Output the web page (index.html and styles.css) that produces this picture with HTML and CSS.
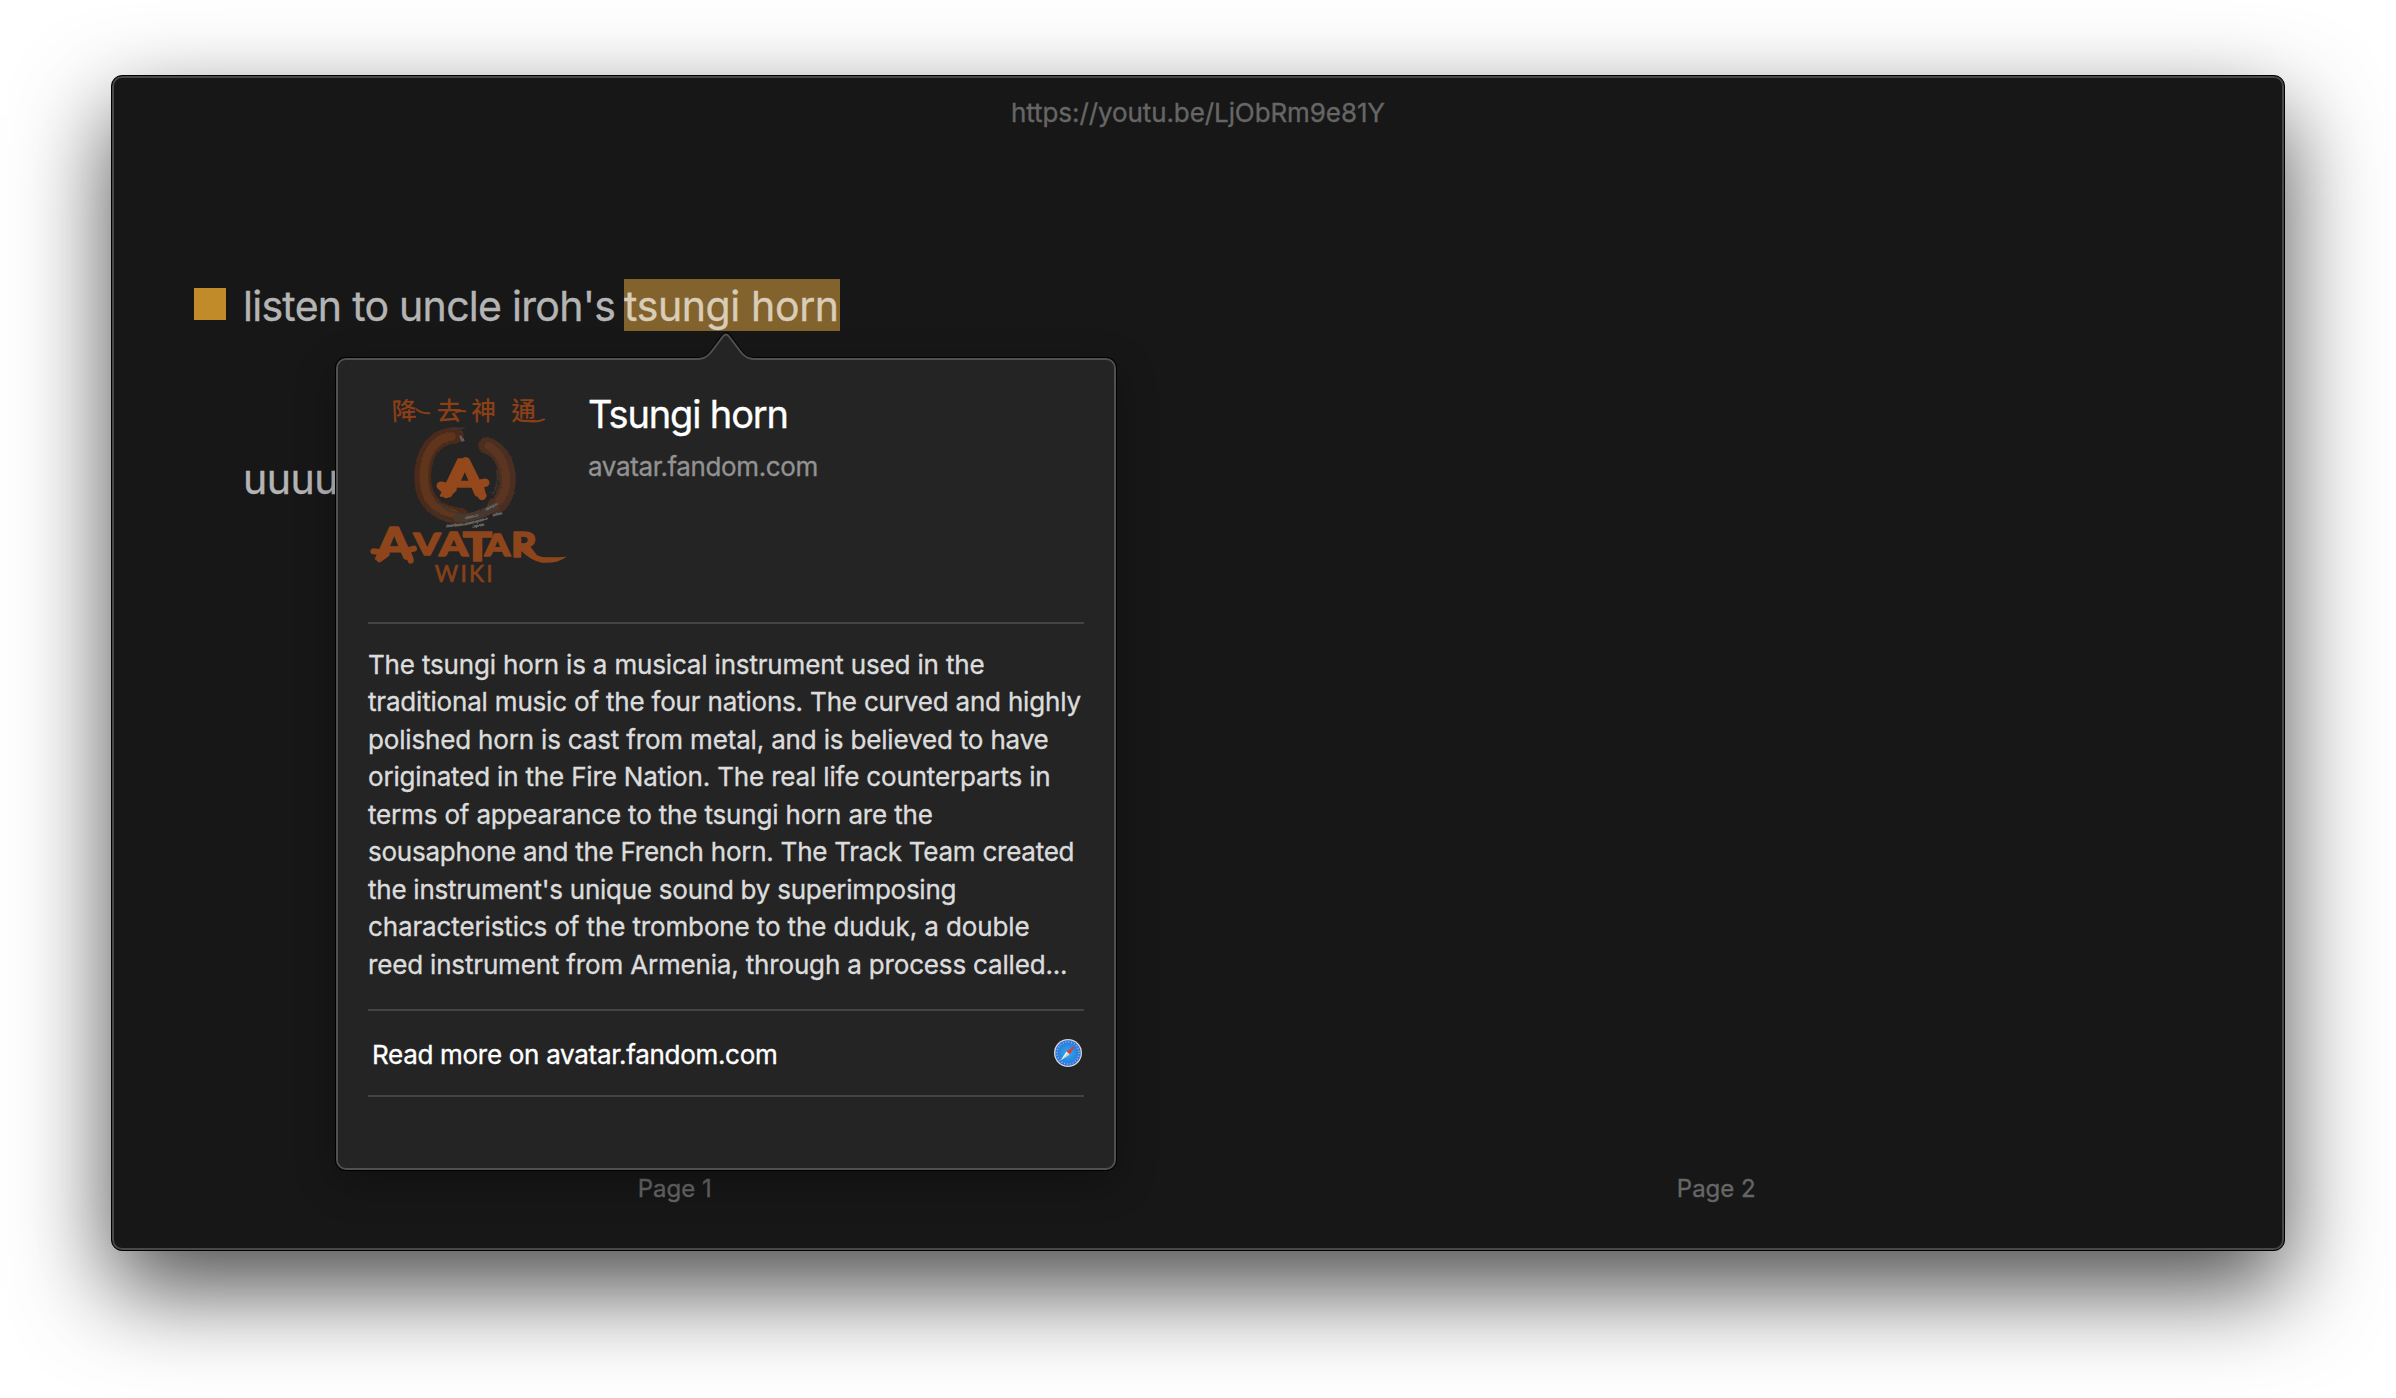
FILE: index.html
```
<!DOCTYPE html>
<html lang="en">
<head>
<meta charset="utf-8">
<title>Tsungi horn</title>
<link rel="stylesheet" href="styles.css">
</head>
<body>
<main class="window">
  <header class="address">https://youtu.be/LjObRm9e81Y</header>
  <div class="pages">
    <section class="page">
      <ul class="outline">
        <li class="item">
          <span class="bullet"></span>
          <span class="item-text lead">listen to uncle iroh's</span>
          <mark class="selection">tsungi horn</mark>
        </li>
        <li class="item">
          <span class="bullet blank"></span>
          <span class="item-text hum">uuuuu</span>
        </li>
      </ul>
      <footer class="page-number">Page 1</footer>
    </section>
    <section class="page">
      <footer class="page-number">Page 2</footer>
    </section>
  </div>

  <aside class="popover">
    <svg class="arrow" viewBox="0 0 64 28" width="64" height="28">
      <path d="M0 27.5V26C11 26 15 22 19 16L28 3.5Q31 -.5 34 3.5L43 16C47 22 51 26 62 26V27.5Z" fill="#242424"/>
      <path d="M0 24C10 24 13 20.500 17.500 14L27 .9Q31 -3.500 35 .9L44.500 14C49 20.500 52 24 62 24" fill="none" stroke="#000" stroke-width="1"/>
      <path d="M0 25C11 25 14.500 21 18.500 15L28 2.500Q31 -1.500 34 2.500L43.500 15C47.500 21 51 25 62 25" fill="none" stroke="#505050" stroke-width="2"/>
    </svg>
    <div class="summary">
      <svg class="logo" viewBox="0 0 200 200" width="200" height="200">
        <defs>
          <filter id="brush" x="-10%" y="-10%" width="120%" height="120%">
            <feTurbulence type="fractalNoise" baseFrequency=".12" numOctaves="3" seed="4"/>
            <feDisplacementMap in="SourceGraphic" scale="8" xChannelSelector="R" yChannelSelector="G"/>
          </filter>
        </defs>
        <g transform="translate(-28 -20) scale(.33333)">
          <g class="hanzi">
            <text x="156" y="150" transform="rotate(-3 190 130)">降</text>
            <text x="290" y="149">去</text>
            <text x="394" y="149">神</text>
            <text x="514" y="149">通</text>
            <path d="M230 118Q242 130 268 130M348 126Q360 122 376 124M556 152Q592 158 612 148" fill="none" stroke="#8a3f17" stroke-width="6" stroke-linecap="round"/>
          </g>
          <g filter="url(#brush)" fill="none" stroke-linecap="round">
            <path d="M346 196C280 200 248 252 248 322C248 392 292 434 362 438" stroke="#4c2c1a" stroke-width="50"/>
            <path d="M334 200C285 204 250 252 252 322C250 380 282 420 344 432" stroke="#5e351b" stroke-width="26"/>
            <path d="M440 226C484 240 504 290 502 336C500 376 486 396 466 410" stroke="#4c2e20" stroke-width="50"/>
            <path d="M446 228C480 246 500 294 498 336C496 366 490 380 478 392" stroke="#5b3520" stroke-width="24"/>
            <path d="M352 444Q410 446 466 410" stroke="#46372f" stroke-width="26"/>
            <path d="M322 468Q380 466 440 446M378 444L412 436M440 418L470 402M460 436L484 430M400 470L430 464M362 200L367 212" stroke="#64605d" stroke-width="7"/>
            <path d="M332 178L372 174M270 414Q300 446 334 456M286 392Q320 424 350 428M470 300Q480 340 458 372" stroke="#3b3532" stroke-width="5"/>
          </g>
          <g class="emblem">
            <text x="304" y="378" font-size="154" textLength="132" lengthAdjust="spacingAndGlyphs">A</text>
            <path d="M302 347L330 352M318 372L338 356M304 349L326 370M404 344L436 338M420 352L426 378M376 274L350 330M378 274L406 330" fill="none" stroke="#94481c" stroke-width="25" stroke-linecap="round" stroke-linejoin="round"/>
          </g>
          <g class="wordmark">
            <text x="108" y="568" font-size="132" textLength="108" lengthAdjust="spacingAndGlyphs">A</text>
            <path d="M100 544L134 548M118 568L140 552M198 542L222 536M206 552L212 572" fill="none" stroke="#8f451b" stroke-width="18" stroke-linecap="round"/>
            <text x="221" y="555" font-size="92" textLength="80" lengthAdjust="spacingAndGlyphs">V</text>
            <text x="298" y="559" font-size="96" textLength="86" lengthAdjust="spacingAndGlyphs">A</text>
            <text x="368" y="572" font-size="122" textLength="88" lengthAdjust="spacingAndGlyphs">T</text>
            <text x="434" y="559" font-size="92" textLength="76" lengthAdjust="spacingAndGlyphs">A</text>
            <text x="514" y="560" font-size="100" textLength="76" lengthAdjust="spacingAndGlyphs">R</text>
            <path d="M546 528Q590 564 624 562Q656 562 680 560Q650 582 606 578Q576 574 540 540Z" fill="#8f451b"/>
          </g>
          <text class="wiki" x="284" y="636" textLength="174" lengthAdjust="spacing">WIKI</text>
        </g>
      </svg>
      <div class="heading">
        <h1 class="title">Tsungi horn</h1>
        <p class="domain">avatar.fandom.com</p>
      </div>
    </div>
    <p class="extract">
      <span class="line">The tsungi horn is a musical instrument used in the</span>
      <span class="line snug">traditional music of the four nations. The curved and highly</span>
      <span class="line">polished horn is cast from metal, and is believed to have</span>
      <span class="line">originated in the Fire Nation. The real life counterparts in</span>
      <span class="line">terms of appearance to the tsungi horn are the</span>
      <span class="line tight">sousaphone and the French horn. The Track Team created</span>
      <span class="line tight">the instrument's unique sound by superimposing</span>
      <span class="line loose">characteristics of the trombone to the duduk, a double</span>
      <span class="line">reed instrument from Armenia, through a process called...</span>
    </p>
    <div class="more">
      <span class="more-label">Read more on avatar.fandom.com</span>
      <svg class="compass" viewBox="0 0 30 30" width="30" height="30">
        <defs>
          <radialGradient id="dial"><stop offset="0" stop-color="#27aee8"/><stop offset="1" stop-color="#2f72dc"/></radialGradient>
        </defs>
        <circle cx="15" cy="15.500" r="14" fill="#161616"/>
        <circle cx="15" cy="15" r="14" fill="#d8d5d2"/>
        <circle cx="15" cy="15" r="12.700" fill="url(#dial)"/>
        <circle cx="15" cy="15" r="11" fill="none" stroke="#8fbdf0" stroke-width="1.600" stroke-dasharray=".9 1.980"/>
        <path d="M22.500 7.500L16.600 16.600L13.400 13.400Z" fill="#e8382f"/>
        <path d="M7.500 22.500L13.400 13.400L16.600 16.600Z" fill="#eef1f0"/>
        <path d="M7.500 22.500L15 15L16.600 16.600Z" fill="#c3cfd2"/>
      </svg>
    </div>
  </aside>
</main>
</body>
</html>
```
FILE: styles.css
```
* { box-sizing: border-box; margin: 0; padding: 0; }

body {
  width: 2396px;
  height: 1398px;
  padding: 75px 111px 147px;
  overflow: hidden;
  background: #fff;
  font-family: Inter, "Liberation Sans", sans-serif;
}

.window {
  position: relative;
  display: flex;
  flex-direction: column;
  height: 1176px;
  border: 1px solid #000;
  border-radius: 11px;
  background: #171717;
  box-shadow: inset 0 0 0 2px #484848, 0 38px 94px rgba(0, 0, 0, .7);
  -webkit-text-stroke: .35px;
}

.address {
  padding-top: 17px;
  font-size: 26px;
  line-height: 40px;
  letter-spacing: -.09px;
  text-align: center;
  color: #666;
}

.pages {
  display: grid;
  grid-template-columns: 1fr 1fr;
  flex: 1;
  padding: 146px 47px 46px 42px;
}

.page {
  display: flex;
  flex-direction: column;
  justify-content: space-between;
}

.page:last-child { justify-content: flex-end; }

.outline {
  display: flex;
  flex-direction: column;
  gap: 121px;
  padding-left: 40px;
  list-style: none;
}

.item {
  display: flex;
  height: 52px;
  font-size: 41px;
  line-height: 51px;
  white-space: nowrap;
  color: #b4b4b4;
}

.bullet {
  width: 32px;
  height: 32px;
  margin: 9px 17px 0 0;
  background: #c18b2a;
}

.blank { background: none; }
.item-text { padding-top: 2px; }
.lead { width: 381px; letter-spacing: -.72px; }
.hum { letter-spacing: -.5px; }

.selection {
  width: 216px;
  padding-top: 2px;
  background: #82622d;
  color: #d9cdb8;
  letter-spacing: -.38px;
}

.page-number {
  height: 30px;
  font-size: 24px;
  line-height: 30px;
  text-align: center;
  letter-spacing: 0;
  color: #666;
}

.popover {
  position: absolute;
  left: 224px;
  top: 282px;
  width: 780px;
  height: 812px;
  padding: 30px;
  border: 2px solid #505050;
  border-radius: 10px;
  background: #242424;
  box-shadow: 0 0 0 1px #000, 0 12px 40px rgba(0, 0, 0, .3);
}

.arrow {
  position: absolute;
  left: 357px;
  top: -26px;
  overflow: visible;
}

.summary {
  display: flex;
  gap: 20px;
  height: 234px;
  border-bottom: 2px solid #444;
}

.logo { flex: none; -webkit-text-stroke: 0; }
.hanzi { font: 500 74px "Noto Sans CJK TC", "Noto Sans CJK SC", sans-serif; fill: #8a3f17; }

.emblem text,
.wordmark text {
  font-family: Lato, sans-serif;
  font-weight: 900;
  stroke-width: 5px;
  stroke-linejoin: round;
}

.emblem text { fill: #94481c; stroke: #94481c; }
.wordmark text { fill: #8f451b; stroke: #8f451b; }
.wiki { font: 400 68px Lato, sans-serif; fill: #864019; stroke: #864019; stroke-width: 2px; }

.title {
  font-size: 38px;
  font-weight: 400;
  line-height: 48px;
  letter-spacing: -1.15px;
  color: #fff;
}

.domain {
  margin-top: 11px;
  font-size: 26px;
  line-height: 36px;
  letter-spacing: -.38px;
  color: #929292;
}

.extract {
  height: 387px;
  padding-top: 22px;
  border-bottom: 2px solid #444;
  font-size: 26px;
  line-height: 37.45px;
  color: #dcdcdc;
}

.line { display: block; white-space: nowrap; letter-spacing: -.17px; }
.snug { letter-spacing: -.19px; }
.tight { letter-spacing: -.25px; }
.loose { letter-spacing: -.125px; }

.more {
  display: flex;
  align-items: center;
  justify-content: space-between;
  height: 86px;
  padding: 0 1px 0 4px;
  border-bottom: 2px solid #444;
}

.more-label {
  padding-top: 3px;
  font-size: 26px;
  line-height: 36px;
  letter-spacing: -.3px;
  color: #fff;
}
```
